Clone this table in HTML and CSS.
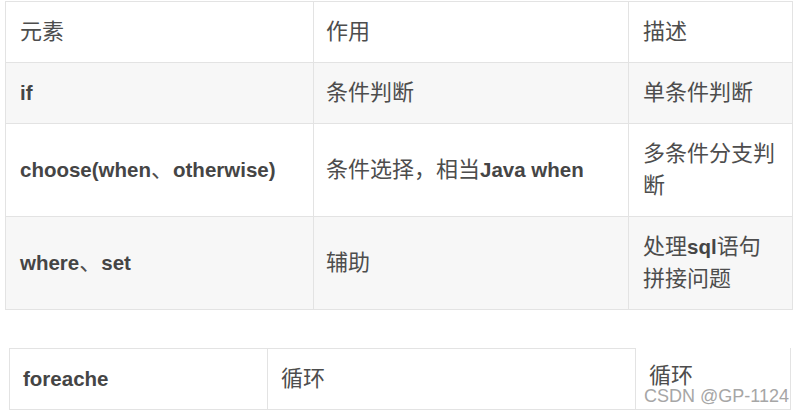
FILE: index.html
```html
<!DOCTYPE html>
<html lang="zh">
<head>
<meta charset="utf-8">
<link rel="stylesheet" href="styles.css">
</head>
<body>
<div class="page">
  <table class="grid grid-main">
    <colgroup>
      <col class="c1">
      <col class="c2">
      <col class="c3">
    </colgroup>
    <tr class="row-white">
      <td>元素</td>
      <td class="mid">作用</td>
      <td>描述</td>
    </tr>
    <tr class="row-gray">
      <td><span class="en">if</span></td>
      <td class="mid">条件判断</td>
      <td>单条件判断</td>
    </tr>
    <tr class="row-white">
      <td><span class="en">choose(when</span>、<span class="en">otherwise)</span></td>
      <td class="mid">条件选择，相当<span class="en">Java when</span></td>
      <td>多条件分支判断</td>
    </tr>
    <tr class="row-gray">
      <td><span class="en">where</span>、<span class="en">set</span></td>
      <td class="mid">辅助</td>
      <td>处理<span class="en">sql</span>语句拼接问题</td>
    </tr>
  </table>

  <table class="grid grid-second">
    <colgroup>
      <col class="d1">
      <col class="d2">
      <col class="d3">
    </colgroup>
    <tr class="row-white">
      <td><span class="en">foreache</span></td>
      <td>循环</td>
      <td class="raised">循环</td>
    </tr>
  </table>

  <div class="watermark">CSDN @GP-1124</div>
</div>
</body>
</html>
```

FILE: styles.css
```css
html, body {
  margin: 0;
  padding: 0;
  background: #ffffff;
}

body {
  font-family: "Liberation Sans", "Noto Sans CJK SC", sans-serif;
  font-size: 22px;
  color: #4d4d4d;
}

.page {
  position: relative;
  width: 804px;
  height: 412px;
  padding-top: 1px;
  box-sizing: border-box;
}

.grid {
  border-collapse: collapse;
  table-layout: fixed;
}

.grid td {
  border: 1px solid #e3e3e3;
  padding: 14px 13px 14px 14px;
  line-height: 32px;
  height: 32px;
  vertical-align: middle;
  text-align: left;
}

.grid td.mid {
  padding-left: 12px;
}

.grid-main {
  width: 787px;
  margin-left: 5px;
}

.grid-main .c1 { width: 308px; }
.grid-main .c2 { width: 315px; }
.grid-main .c3 { width: 164px; }

.grid-second {
  width: 781px;
  margin-left: 9px;
  margin-top: 38px;
}

.grid-second .d1 { width: 258px; }
.grid-second .d2 { width: 368px; }
.grid-second .d3 { width: 155px; }

.grid-second td {
  padding-left: 13px;
}

.row-white td { background: #ffffff; }
.row-gray td { background: #f7f7f7; }

.en {
  font-weight: bold;
  color: #454545;
  font-size: 20.5px;
}

.raised {
  position: relative;
  top: -3px;
}

.watermark {
  position: absolute;
  right: 15px;
  top: 385px;
  font-family: "Liberation Sans", sans-serif;
  font-size: 18px;
  color: #a6a6a6;
  line-height: 22px;
}
```
